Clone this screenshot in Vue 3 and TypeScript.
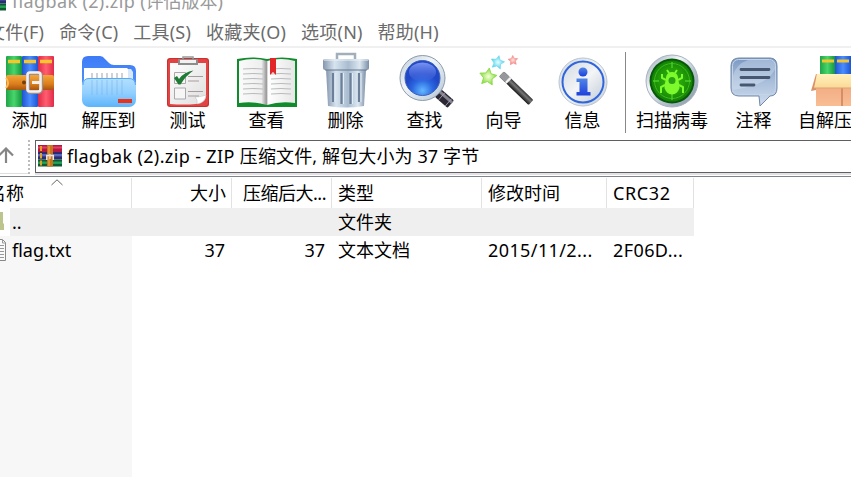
<script setup lang="ts">
interface Tool {
  id: string
  label: string
}

const menus: string[] = ['文件(F)', '命令(C)', '工具(S)', '收藏夹(O)', '选项(N)', '帮助(H)']

const archiveTools: Tool[] = [
  { id: 'add', label: '添加' },
  { id: 'extract', label: '解压到' },
  { id: 'test', label: '测试' },
  { id: 'view', label: '查看' },
  { id: 'delete', label: '删除' },
  { id: 'find', label: '查找' },
  { id: 'wizard', label: '向导' },
  { id: 'info', label: '信息' },
]

const extraTools: Tool[] = [
  { id: 'scan', label: '扫描病毒' },
  { id: 'comment', label: '注释' },
  { id: 'sfx', label: '自解压格式' },
]

const columns: string[] = ['名称', '大小', '压缩后大...', '类型', '修改时间', 'CRC32']

const rows = [
  { folder: true, cells: ['..', '', '', '文件夹', '', ''] },
  { folder: false, cells: ['flag.txt', '37', '37', '文本文档', '2015/11/2...', '2F06D...'] },
]

// Corner list of a five-pointed star around (cx, cy).
function star(cx: number, cy: number, r: number, tilt: number): string {
  return Array.from({ length: 10 }, (_, i) => {
    const a = (i * 36 - 90 + tilt) * (Math.PI / 180)
    const d = i % 2 ? r * 0.5 : r
    return `${(cx + d * Math.cos(a)).toFixed(1)},${(cy + d * Math.sin(a)).toFixed(1)}`
  }).join(' ')
}
</script>

<template>
  <div class="window">
    <svg class="defs" width="0" height="0">
      <defs>
        <linearGradient id="gGreen"><stop offset="0" stop-color="#1fa348" /><stop offset=".5" stop-color="#48d66b" /><stop offset="1" stop-color="#159440" /></linearGradient>
        <linearGradient id="gBlue"><stop offset="0" stop-color="#1f55cf" /><stop offset=".5" stop-color="#4b8dff" /><stop offset="1" stop-color="#1c55d4" /></linearGradient>
        <linearGradient id="gRed"><stop offset="0" stop-color="#e02846" /><stop offset=".5" stop-color="#ff5f70" /><stop offset="1" stop-color="#e02b48" /></linearGradient>
        <linearGradient id="gBelt" x2="0" y2="1"><stop offset="0" stop-color="#f4a63a" /><stop offset=".6" stop-color="#dc7e1c" /><stop offset="1" stop-color="#a9540f" /></linearGradient>
        <linearGradient id="gFolder" x2="0" y2="1"><stop offset="0" stop-color="#b4e0ff" /><stop offset=".5" stop-color="#93d0ff" /><stop offset="1" stop-color="#5cb4fb" /></linearGradient>
        <linearGradient id="gFolderBack" x2="0" y2="1"><stop offset="0" stop-color="#3c7bf6" /><stop offset="1" stop-color="#5b9bfb" /></linearGradient>
        <linearGradient id="gPaper" x2="1" y2="1"><stop offset="0" stop-color="#ffffff" /><stop offset="1" stop-color="#dedede" /></linearGradient>
        <linearGradient id="gPage"><stop offset="0" stop-color="#fbfbfb" /><stop offset=".4" stop-color="#eee" /><stop offset=".49" stop-color="#999" /><stop offset=".52" stop-color="#fff" /><stop offset="1" stop-color="#e6e6e6" /></linearGradient>
        <linearGradient id="gBin"><stop offset="0" stop-color="#8496ae" /><stop offset=".25" stop-color="#d7e4ef" /><stop offset=".55" stop-color="#a9bccf" /><stop offset=".8" stop-color="#dce8f1" /><stop offset="1" stop-color="#7c8fa7" /></linearGradient>
        <linearGradient id="gSteel" x2="1" y2="1"><stop offset="0" stop-color="#8fa0b2" /><stop offset=".35" stop-color="#f4f7fa" /><stop offset=".6" stop-color="#b9c6d1" /><stop offset="1" stop-color="#8292a4" /></linearGradient>
        <linearGradient id="gRim" x2="1" y2="1"><stop offset="0" stop-color="#bccad8" /><stop offset=".4" stop-color="#f1f5f8" /><stop offset=".8" stop-color="#c8d6e1" /><stop offset="1" stop-color="#95a7b8" /></linearGradient>
        <radialGradient id="gLens" cy=".86"><stop offset="0" stop-color="#62b8ff" /><stop offset=".6" stop-color="#2b66e0" /><stop offset="1" stop-color="#2148c6" /></radialGradient>
        <linearGradient id="gShine" x2="0" y2="1"><stop offset="0" stop-color="#8fa6fb" stop-opacity=".8" /><stop offset="1" stop-color="#3f63e0" stop-opacity=".3" /></linearGradient>
        <linearGradient id="gRod" x2="0" y2="1"><stop offset="0" stop-color="#333" /><stop offset=".4" stop-color="#777" /><stop offset="1" stop-color="#181818" /></linearGradient>
        <linearGradient id="gDisk" x2="1" y2="1"><stop offset="0" stop-color="#cfd8e0" /><stop offset=".5" stop-color="#f3f5f7" /><stop offset="1" stop-color="#c0cbd6" /></linearGradient>
        <linearGradient id="gInfo" x2="0" y2="1"><stop offset="0" stop-color="#5086e6" /><stop offset="1" stop-color="#1e3fdc" /></linearGradient>
        <radialGradient id="gScan"><stop offset="0" stop-color="#35b814" /><stop offset=".65" stop-color="#219b08" /><stop offset="1" stop-color="#128006" /></radialGradient>
        <radialGradient id="gStarG"><stop offset="0" stop-color="#f4ffd8" /><stop offset="1" stop-color="#86dc3c" /></radialGradient>
        <radialGradient id="gStarC"><stop offset="0" stop-color="#e6fdff" /><stop offset="1" stop-color="#50d4ee" /></radialGradient>
        <radialGradient id="gStarR"><stop offset="0" stop-color="#ffe4e2" /><stop offset="1" stop-color="#f47a76" /></radialGradient>
        <linearGradient id="gBubble" x2="0" y2="1"><stop offset="0" stop-color="#7c98c2" /><stop offset=".5" stop-color="#aabfdb" /><stop offset="1" stop-color="#d0deed" /></linearGradient>
        <linearGradient id="gBox" x2="0" y2="1"><stop offset="0" stop-color="#eda27a" /><stop offset="1" stop-color="#f9bd94" /></linearGradient>
        <linearGradient id="gFlap" x2="0" y2="1"><stop offset="0" stop-color="#fff1bc" /><stop offset="1" stop-color="#fbd997" /></linearGradient>
        <symbol id="rar" viewBox="0 0 24 22">
          <rect width="24" height="7" fill="#b5183f" /><rect y="1.5" width="24" height="2" fill="#e0416a" />
          <rect y="7" width="24" height="7.5" fill="#2b2c74" /><rect y="9" width="24" height="2.400" fill="#5c68bd" />
          <rect y="14.5" width="24" height="7" fill="#0f5a31" /><rect y="16.5" width="24" height="2.400" fill="#25a257" />
          <path d="M3 1v5M3 8v5.500M3 15.500v5" stroke="#e0a323" stroke-width="2" />
          <rect x="9" width="6" height="21.500" fill="#c9731c" /><path d="M11 1v20" stroke="#f2b346" />
          <path d="M8.800 15v-4.500h6.500V15" fill="none" stroke="#e7e7e7" stroke-width="1.500" /><path d="M12 9v5" stroke="#ddd" stroke-width="1.300" />
        </symbol>
      </defs>
    </svg>

    <div class="titlebar">
      <svg class="title-icon" width="24" height="22"><use href="#rar" width="24" height="22" /></svg>
      <span class="title"><span class="latin">flagbak (2).zip </span>(评估版本)</span>
    </div>

    <nav class="menubar">
      <span v-for="menu in menus" :key="menu">{{ menu }}</span>
    </nav>

    <div class="toolbar">
      <template v-for="(group, g) in [archiveTools, extraTools]" :key="g">
        <div v-if="g" class="divider"></div>
        <button v-for="tool in group" :key="tool.id" class="tool" :class="tool.id" type="button">
          <svg class="tool-icon" viewBox="0 0 60 56" width="60" height="56">
            <g v-if="tool.id === 'add'">
              <rect x="6" y="4" width="16" height="51" rx="1" fill="url(#gGreen)" />
              <rect x="22" y="4" width="16" height="51" rx="1" fill="url(#gBlue)" />
              <rect x="38" y="4" width="16" height="51" rx="1" fill="url(#gRed)" />
              <path d="M8 9.500h12M24 9.500h12M40 9.500h12" stroke="#f7c62d" stroke-width="3.500" />
              <rect x="6" y="23" width="48" height="15" rx="2" fill="url(#gBelt)" />
              <path d="M6 26q4 5 0 10" fill="none" stroke="#f9bd5f" stroke-width="2" />
              <circle cx="24" cy="30.500" r="2" fill="#71400f" />
              <rect x="28" y="21" width="13" height="19" rx="2.500" fill="none" stroke="#9a8f8e" stroke-width="4" />
              <rect x="27.500" y="20.500" width="13" height="19" rx="2.500" fill="none" stroke="#f2f0ef" stroke-width="2.600" />
              <path d="M32 30.500h9" stroke="#f2f0ef" stroke-width="3" />
            </g>
            <g v-else-if="tool.id === 'extract'">
              <path d="M3 10q0-6 6-6h12q3 0 5 3l4 4q2 2 5 2h16q6 0 6 6v26H3z" fill="url(#gFolderBack)" />
              <path d="M5 16h43l3 3v18H5z" fill="#fff" /><path d="M49 17h3l2 3v14h-5z" fill="#d8e7f9" />
              <path d="M13 21v8M18 21v8M23 21v8M28 21v8M33 21v8M38 21v8M43 21v8" stroke="#b8bfc9" stroke-width="1.400" />
              <rect x="3" y="26" width="54" height="29" rx="7" fill="url(#gFolder)" />
              <path d="M4 33q0-6.500 6-6.500h40q6 0 6.500 6.500" fill="none" stroke="#58aaf2" />
              <path d="M13 28v15M18 28v15M23 28v15M28 28v15M33 28v15M38 28v15M43 28v15" stroke="#75b2e6" stroke-width="1.400" opacity=".4" />
              <rect x="39" y="47" width="14" height="4" fill="#ea3219" />
            </g>
            <g v-else-if="tool.id === 'test'">
              <rect x="9" y="6" width="42" height="49" rx="3" fill="#c9302f" /><rect x="10" y="7" width="40" height="47" rx="3" fill="#e24343" />
              <path d="M12 11h36v34q-1 6-10 7-12 1-26 0z" fill="url(#gPaper)" />
              <path d="M48 43q-5 2-11 2 3 3 2 7 8-1 9-9" fill="#fff" stroke="#bbb" stroke-width=".5" />
              <path d="M20 7h20v6H20z" fill="#8d8d8d" /><path d="M22 8h16v3H22z" fill="#f1f1f1" />
              <path d="M25 7V5h10v2" fill="none" stroke="#999" stroke-width="1.500" />
              <path d="M16.500 20.500h11v11h-11zM16.500 36h11v11h-11z" fill="#f6f6f6" stroke="#aaa" />
              <path d="M16 26l4.500 6.500h2q5-8.500 13-14-9 1-14.500 8.500l-2-3z" fill="#1f7a33" />
              <path d="M30 24.500h15M30 29h11M30 39.500h15M30 44h11" stroke="#a89b9b" stroke-width="1.200" />
            </g>
            <g v-else-if="tool.id === 'view'">
              <path d="M0 7q15-3 30 0 15-3 30 0v48H0z" fill="#118c2d" />
              <path d="M2 9q15-4 28 0 14-4 28 0v42q-15-2-28 2-13-4-28-2z" fill="url(#gPage)" />
              <path d="M6 17q10-1 20 0M6 22q10-1 20 0M6 27q10-1 20 0M6 32q10-1 20 0M6 37q10-1 20 0M6 42q10-1 20 0M34 17q10-1 20 0M34 22q10-1 20 0M34 27q10-1 20 0M34 32q10-1 20 0M34 37q10-1 20 0M34 42q10-1 20 0" fill="none" stroke="#b9bbbe" stroke-width="1.200" />
              <path d="M33 6h6v17l-3-3-3 3z" fill="#e22528" />
            </g>
            <g v-else-if="tool.id === 'delete'">
              <path d="M21 8V2h18v6" fill="none" stroke="#a2aeba" stroke-width="2.500" />
              <path d="M10 17h40l-2 37q-18 3-36 0z" fill="url(#gBin)" />
              <path d="M17 21v29M25.500 21v31M34.500 21v31M43 21v29" stroke="#6d8099" stroke-width="2.200" /><path d="M19 21v29M27.500 21v31M36.500 21v31M45 21v29" stroke="#e3edf6" />
              <rect x="7" y="7" width="46" height="11" rx="2" fill="url(#gBin)" /><path d="M8 8h44" stroke="#edf3f8" />
              <path d="M9 18h42" stroke="#65768f" />
            </g>
            <g v-else-if="tool.id === 'find'">
              <g transform="translate(43 41) rotate(41)"><rect x="-3" y="-3" width="5" height="6" fill="#aab" /><rect y="-5" width="17" height="10" rx="1.500" fill="#2b2733" /><rect y="-3.500" width="17" height="3" fill="#85828f" /><path d="M5-5v10M14-5v10" stroke="#a9a8b3" stroke-width=".8" /></g>
              <circle cx="27.500" cy="26" r="22.500" fill="url(#gRim)" stroke="#8b9aaa" /><circle cx="27.500" cy="26" r="17.500" fill="url(#gLens)" stroke="#3c62bd" />
              <ellipse cx="27.500" cy="20" rx="13.500" ry="9.500" fill="url(#gShine)" />
            </g>
            <g v-else-if="tool.id === 'wizard'">
              <polygon :points="star(14, 25, 9, 8)" fill="url(#gStarG)" stroke="#8fdc50" />
              <polygon :points="star(23.500, 10.500, 7, 12)" fill="url(#gStarC)" stroke="#6bd6ec" stroke-width=".7" />
              <polygon :points="star(39, 8.500, 5, -4)" fill="url(#gStarR)" stroke="#f19793" stroke-width=".7" />
              <g transform="translate(27.500 22) rotate(44)"><rect y="-3.500" width="41" height="7" rx="1.500" fill="url(#gRod)" /><rect y="-3.500" width="8" height="7" rx="1" fill="#96989c" /><rect x="8" y="-3.500" width="2.500" height="7" fill="#f4f4f4" /></g>
            </g>
            <g v-else-if="tool.id === 'info'">
              <circle cx="30" cy="30" r="24" fill="url(#gDisk)" stroke="#b9c5d0" /><circle cx="30" cy="30" r="20.500" fill="url(#gDisk)" stroke="#3165dc" stroke-width="2" />
              <circle cx="30" cy="20" r="4.500" fill="url(#gInfo)" /><path d="M23.500 26.500H34.500V40h3v3.500h-14V40h3V30h-3z" fill="url(#gInfo)" />
            </g>
            <g v-else-if="tool.id === 'scan'">
              <circle cx="30" cy="29" r="26" fill="url(#gSteel)" stroke="#a7b2bf" /><circle cx="30" cy="29" r="22.500" fill="#08580a" /><circle cx="30" cy="29" r="20.500" fill="url(#gScan)" />
              <circle cx="30" cy="29" r="17.500" fill="none" stroke="#3dba1c" /><path d="M30 10v6M30 42v6M11 29h6M43 29h6" stroke="#4ccc28" stroke-width="1.400" />
              <path d="M22.500 36q0-9 4-10.500h7q4 1.500 4 10.500-2 6-7.500 6.500-5.500-.500-7.500-6.500z" fill="#7dfa2b" />
              <path d="M24 25.500q1-5.500 6-5.500t6 5.500v3H24z" fill="#7dfa2b" /><circle cx="30" cy="28.500" r="3.500" fill="#2aa216" />
              <path d="M27 21l-2-3M33 21l2-3M24 28l-4-2v-4M36 28l4-2v-4M23 33l-4 2v6M37 33l4 2v6" fill="none" stroke="#7dfa2b" stroke-width="2" />
            </g>
            <g v-else-if="tool.id === 'comment'">
              <path d="M15 6h31q7 0 7 8v22q0 8-7 8L36 54l-1-10H15q-8 0-8-8V14q0-8 8-8z" fill="url(#gBubble)" stroke="#7189ac" />
              <path d="M9 38V24Q12 12 24 8h21q7 0 7 7-6 18-43 23z" fill="#dfeaf5" opacity=".35" /><rect x="8.500" y="7.500" width="43" height="35" rx="6" fill="none" stroke="#c5d4e6" />
              <path d="M17 17.500h28M17 25.500h28M17 33h13" stroke="#465871" stroke-width="2.800" stroke-linecap="round" />
            </g>
            <g v-else>
              <path d="M10 4h15v21H10z" fill="url(#gGreen)" /><path d="M25 4h16v21H25z" fill="url(#gBlue)" /><path d="M41 4h15v21H41z" fill="url(#gRed)" />
              <path d="M12 9h12M27 9h12M43 9h12" stroke="#f6c52b" stroke-width="3" />
              <path d="M6 22h48v32H6z" fill="url(#gBox)" /><path d="M32 35v19" stroke="#cd815b" stroke-width="1.500" /><path d="M6 22L1 39l5-1z" fill="#d99167" />
              <path d="M7 22h46l5 14H4z" fill="url(#gFlap)" /><path d="M4 36h54" stroke="#dfa371" />
            </g>
          </svg>
          <span class="tool-label">{{ tool.label }}</span>
        </button>
      </template>
    </div>

    <div class="address">
      <div class="up">
        <svg width="15" height="18" viewBox="0 0 15 18"><path d="M6 16V2M-1 8.500L6 1.500l7 7" fill="none" stroke="#858585" stroke-width="2.200" /></svg>
      </div>
      <div class="grip"></div>
      <div class="path">
        <svg width="24" height="22"><use href="#rar" width="24" height="22" /></svg>
        <span class="path-text"><span class="latin">flagbak (2).zip - ZIP </span>压缩文件, 解包大小为 37 字节</span>
      </div>
    </div>

    <div class="files">
      <div class="head grid">
        <div v-for="column in columns" :key="column" class="cell">{{ column }}</div>
        <svg class="sort" width="12" height="7" viewBox="0 0 12 7"><path d="M.5 6L6 .8 11.500 6" fill="none" stroke="#666" /></svg>
      </div>
      <div v-for="row in rows" :key="row.cells[0]" class="row grid" :class="{ selected: row.folder }">
        <div v-for="(cell, i) in row.cells" :key="i" class="cell">
          <svg v-if="i === 0 && row.folder" class="file-icon" width="10" height="28"><rect width="10" height="28" fill="#fff" /><path d="M0 4h3v11l1 1v6H0z" fill="#bdc58f" /></svg>
          <svg v-else-if="i === 0" class="file-icon" width="10" height="28"><path d="M0 3.500h2.500l3 3v18H0" fill="#fafafa" stroke="#888" /><path d="M2.500 4v3h3M0 9.500h4M0 12.500h4M0 15.500h4M0 18.500h4M0 21.500h4" fill="none" stroke="#999" /></svg>
          <span>{{ cell }}</span>
        </div>
      </div>
      <div class="blank"></div>
    </div>
  </div>
</template>

<style>
body { margin: 0; overflow: hidden; background: #fff; }
</style>

<style scoped>
.window { width: 851px; height: 477px; overflow: hidden; display: flex; flex-direction: column; background: #fff; color: #000; font: 18px/26px "Noto Sans", "Noto Sans CJK SC", sans-serif; font-weight: 400; white-space: pre; }
.defs { position: absolute; }
svg { display: block; flex: none; }
.latin { letter-spacing: .37px; }
.titlebar { height: 19px; display: flex; align-items: flex-start; color: #999; }
.title { margin: -12px 0 0 6px; }
.title-icon { margin: -11px 0 0 -18px; }
.menubar { height: 27px; box-sizing: border-box; display: flex; gap: 14.9px; margin-left: -13px; color: #6b6b6b; letter-spacing: .22px; }
.menubar span { flex: none; }
.toolbar { height: 93px; box-sizing: border-box; border-top: 2px solid #f0f0f0; display: flex; margin-right: -50px; padding-top: 4px; }
.tool { flex: none; width: 79px; height: 85px; margin: 0; padding: 0; border: 0; background: none; font: inherit; color: inherit; display: flex; flex-direction: column; align-items: center; }
.tool.add { margin-left: -10px; }
.tool-icon { height: 56px; }
.tool-label { white-space: nowrap; margin-top: -1px; }
.divider { flex: none; width: 1px; height: 81px; margin: 0 0 0 3px; background: #888; }
.tool.scan { width: 92px; }
.tool.comment { width: 71px; }
.tool.sfx { width: 90px; margin-left: 9px; }
.tool.sfx .tool-icon { margin-left: -6px; }
.address { height: 38px; box-sizing: border-box; display: flex; padding-top: 1px; border-bottom: 1px solid #7f858c; }
.up { width: 28px; height: 34px; box-sizing: border-box; padding-bottom: 2px; border-bottom: 1px solid #dedde0; display: flex; align-items: center; }
.grip { width: 2px; height: 34px; background: repeating-linear-gradient(#bbb 0 2px, transparent 2px 4px); margin-right: 5px; }
.path { flex: 1; height: 33px; box-sizing: border-box; border: 1px solid #606064; border-right: 0; display: flex; align-items: center; padding: 0 0 2px 2px; gap: 5px; box-shadow: 0 2px 0 #e2e0e5; }
.path-text { letter-spacing: .12px; }
.files { flex: 1; display: flex; flex-direction: column; }
.grid { display: grid; grid-template-columns: 132px 100px 100px 150px 125px 87px; width: 694px; }
.cell { box-sizing: border-box; overflow: hidden; line-height: 28px; padding-left: 6px; }
.cell:nth-child(2), .cell:nth-child(3) { text-align: right; padding-right: 7px; }
.cell:nth-child(5), .cell:nth-child(6) { letter-spacing: .4px; }
.head { height: 31px; position: relative; }
.head .cell { border-right: 1px solid #e2e2e2; line-height: 31px; margin-top: 1px; }
.head .cell:nth-child(2), .head .cell:nth-child(3) { padding-right: 5px; }
.head .cell:nth-child(3) { letter-spacing: -.5px; }
.head .cell:nth-child(5) { letter-spacing: 0; }
.head .cell:nth-child(6) { letter-spacing: .6px; }
.head .cell:first-child { padding: 0; text-indent: -12px; }
.sort { position: absolute; left: 51px; top: 2px; }
.row { height: 28px; }
.row .cell:first-child { display: flex; gap: 2px; padding: 0; background: #f7f7f7; }
.row.selected, .row.selected .cell:first-child { background: #efefef; }
.blank { width: 132px; flex: 1; background: #f7f7f7; }
</style>
